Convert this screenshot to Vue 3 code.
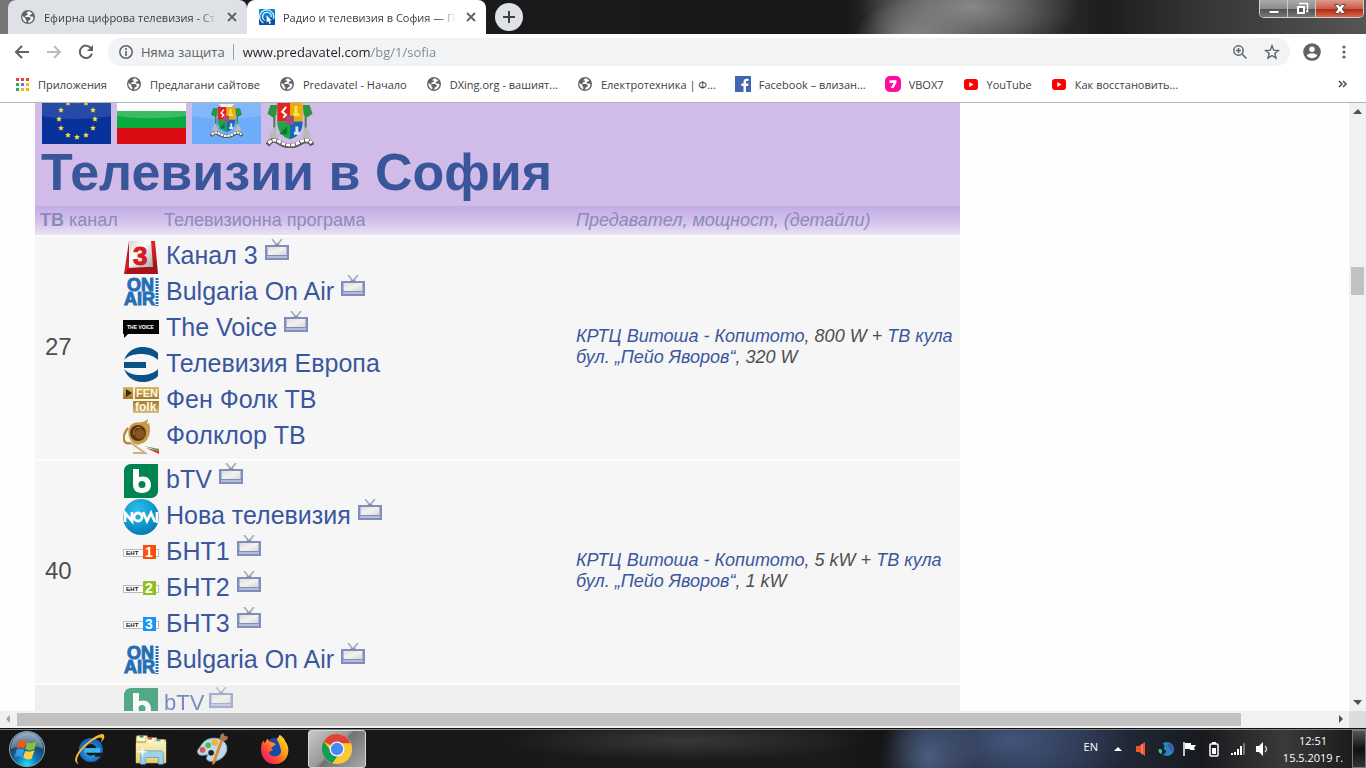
<template>
  <div class="browser">
    <!-- Shared icon shapes -->
    <svg class="sprite" aria-hidden="true">
      <defs>
        <linearGradient id="screen" x1="0" y1="0" x2="1" y2="1">
          <stop offset="0" stop-color="#ddd" />
          <stop offset=".5" stop-color="#f4f2ee" />
          <stop offset="1" stop-color="#d8d8d8" />
        </linearGradient>
        <linearGradient id="red" x1="0" y1="0" x2="1" y2="1">
          <stop offset="0" stop-color="#9c1014" />
          <stop offset=".5" stop-color="#d8262a" />
          <stop offset="1" stop-color="#8c0c10" />
        </linearGradient>
        <linearGradient id="silver" x1="0" y1="0" x2="1" y2="1">
          <stop offset="0" stop-color="#d8d0d0" />
          <stop offset=".4" stop-color="#fff" />
          <stop offset="1" stop-color="#a8a4a4" />
        </linearGradient>
        <linearGradient id="gold" x1="0" y1="0" x2="0" y2="1">
          <stop offset="0" stop-color="#d8b86a" />
          <stop offset=".5" stop-color="#9c7424" />
          <stop offset="1" stop-color="#d8be80" />
        </linearGradient>
        <radialGradient id="nova" cx=".4" cy=".3" r=".8">
          <stop offset="0" stop-color="#2fc0ea" />
          <stop offset=".6" stop-color="#0d95cc" />
          <stop offset="1" stop-color="#0a6fa8" />
        </radialGradient>
        <radialGradient id="orb" cx=".5" cy=".95" r=".9">
          <stop offset="0" stop-color="#1fe0fb" />
          <stop offset=".35" stop-color="#0f78b4" />
          <stop offset=".7" stop-color="#1b4368" />
          <stop offset="1" stop-color="#6c8ca4" />
        </radialGradient>
        <radialGradient id="ie" cx=".5" cy=".6" r=".6">
          <stop offset="0" stop-color="#38c0f8" />
          <stop offset="1" stop-color="#1566bc" />
        </radialGradient>
        <linearGradient id="folder" x1="0" y1="0" x2="0" y2="1">
          <stop offset="0" stop-color="#fbf2bb" />
          <stop offset="1" stop-color="#e6cd73" />
        </linearGradient>
        <linearGradient id="fire" x1="1" y1="0" x2="0" y2="1">
          <stop offset="0" stop-color="#ffe930" />
          <stop offset=".4" stop-color="#ff9a14" />
          <stop offset=".7" stop-color="#ff3d3e" />
          <stop offset="1" stop-color="#d8107c" />
        </linearGradient>
      </defs>

      <symbol id="globe" viewBox="0 0 16 16">
        <circle cx="8" cy="8" r="7" fill="#5f6368" />
        <path d="M8.200 2.300 6 4.300l2.100.4-.4 1.200-2 .5-.6 1.500h4.200l1.500 1.700-.4 1.200-1.600.7-1 2.300c3.400-.1 5.700-2.800 5.700-5.500l-1.300-.8-1.700.2-1.100-1.300 1.700-1.200 1.200-.1C11.600 3.500 10 2.500 8.200 2.300zM2.300 7.100C2 9.500 3.500 12.300 6.100 13.400l.4-1.800-1.200-1.300.2-1.300z" fill="#fff" />
      </symbol>
      <symbol id="radio" viewBox="0 0 16 16">
        <rect width="16" height="16" rx="1" fill="#0a83cf" />
        <path d="M0 9h16v6a1 1 0 0 1-1 1H1a1 1 0 0 1-1-1z" fill="#0752a8" />
        <g fill="none" stroke="#d4efff" stroke-width="1.300">
          <path d="M4.500 14A7 7 0 1 1 14.300 10" />
          <path d="M6 11.500A4.300 4.300 0 1 1 12.200 8" />
        </g>
        <path d="M7.500 6.500v7l1.700-1.500 1.300 3 1.500-.7-1.400-2.800h2.300z" fill="#fff" />
      </symbol>
      <symbol id="facebook" viewBox="0 0 16 16">
        <rect width="16" height="16" fill="#4267b2" />
        <path d="M11 16v-6h2.200l.3-2.400H11V6.200c0-.7.300-1.200 1.200-1.200h1.300V2.800C13 2.700 12.400 2.700 11.700 2.700 9.700 2.700 8.500 3.900 8.500 6v1.600H6.400V10h2.100v6z" fill="#fff" />
      </symbol>
      <symbol id="vbox" viewBox="0 0 16 16">
        <rect width="16" height="16" rx="5" fill="#ff0c9c" />
        <path d="M4.500 4.300h7v2.300L8.600 12H5.700l2.900-5H4.500z" fill="#fff" />
      </symbol>
      <symbol id="youtube" viewBox="0 0 16 16">
        <rect x="1" y="3" width="14" height="11" rx="3" fill="#f00" />
        <path d="m6.300 6 4.200 2.500-4.200 2.500z" fill="#fff" />
      </symbol>

      <symbol id="tv" viewBox="0 0 24 21">
        <path d="m7 0 5 6 5-6" fill="none" stroke="#a3a6b0" stroke-width="1.500" />
        <path d="M10 5h4l1 2H9z" fill="#8c90a0" />
        <path d="M1 7h22v13H1z" fill="#b4bcd6" stroke="#7f8fbd" stroke-width="2" />
        <path d="M3 8h18v8H3z" fill="url(#screen)" />
        <path d="M2 16.500h20" stroke="#7f8fbd" />
      </symbol>

      <symbol id="kanal3" viewBox="0 0 36 36">
        <path d="M6 2h26l3 33H1z" fill="url(#red)" />
        <path d="m6 2 22-1 2 27-24 1z" fill="url(#silver)" />
        <path d="m1 35 4-6 25-1 5 7z" fill="#a81218" />
      </symbol>
      <symbol id="onair" viewBox="0 0 36 36">
        <path d="M34 3v28" stroke="#256eb4" stroke-width="3" stroke-dasharray="2 1" />
      </symbol>
      <symbol id="voice" viewBox="0 0 36 36">
        <path d="M0 9h36v14H5l-4 4v-4H0z" fill="#050505" />
      </symbol>
      <symbol id="europa" viewBox="0 0 36 36">
        <path d="M1 13C4 5 11 0 19 0c7 0 12 2 16 6v7c-4-4-10-6-17-6-8 0-13 2-17 6zM1 22C4 30 11 35 19 35c7 0 12-2 16-6v-7c-4 4-10 6-17 6-8 0-13-2-17-6zM1 15h22v6H1z" fill="#0a5288" />
      </symbol>
      <symbol id="fenfolk" viewBox="0 0 36 36">
        <path d="M0 4h36v12H0zM10 18h26v12H10z" fill="url(#gold)" />
        <path d="M11 4v12" stroke="#f8ecc4" stroke-width="2" />
        <path d="m3 6 6 4-6 4z" fill="#3c2808" />
      </symbol>
      <symbol id="folklor" viewBox="0 0 36 36">
        <path d="M8 6c5-5 10 0 17-6l-1 5 2-1c2 7 1 12-2 17-5 6-13 6-16 1S4 11 8 6z" fill="#c89a4a" />
        <circle cx="15" cy="14" r="8" fill="#5a3510" />
        <circle cx="17" cy="15" r="5" fill="#89551e" />
        <path d="M11 16c-1-6 3-9 7-7" fill="none" stroke="#bd8d4a" />
        <path d="M5 9c-7 9-5 17 3 15" fill="none" stroke="#b58b3c" stroke-width="2.500" />
        <path d="m8 24 14 10H10" fill="none" stroke="#c9b184" stroke-width="2" />
        <path d="m18 24 18 5v2l-18-5z" fill="#f7f7f7" />
        <path d="m21 27 15 3v2z" fill="#36a05a" />
        <path d="m23 29 13 3v3z" fill="#e42d2d" />
      </symbol>
      <symbol id="btv" viewBox="0 0 36 36">
        <path d="M8 1h27v27c0 4-3 7-7 7H1V8c0-4 3-7 7-7z" fill="#008450" />
        <path d="M10 6h6v8c7-2 12 1 12 8 0 5-4 8-9 8-7 0-9-4-9-9zm9 12a3.500 3.500 0 1 0 0 7 3.500 3.500 0 0 0 0-7z" fill="#fff" />
      </symbol>
      <symbol id="novatv" viewBox="0 0 36 36">
        <circle cx="18" cy="18" r="18" fill="url(#nova)" />
        <g fill="none" stroke="#fff" stroke-width="2.800">
          <path d="M2 23v-9l7 8v-9M20 13l4 9 4-8 4 9" />
          <circle cx="15" cy="18" r="4" />
          <path d="M34 13v11" />
        </g>
      </symbol>
      <symbol id="bnt" viewBox="0 0 36 36">
        <path d="M.5 14.500h35v7H.5z" fill="#fff" stroke="#bbb" />
        <path d="M20 10h13v14H20z" fill="currentColor" />
      </symbol>

      <symbol id="arms" viewBox="0 0 48 46">
        <path d="M8 10v25M40 10v25" stroke="#4c7a4e" stroke-width="2" />
        <path d="M4 2h7l-1 10-3 3-6-4zM44 2h-7l1 10 3 3 6-4z" fill="#28963c" />
        <path d="m3 31 5-7 4 11-9 5zM45 31l-5-7-4 11 9 5z" fill="#b8bcb8" />
        <path d="M11 0h13v19H11z" fill="#e32222" />
        <path d="M24 0h13v19H24z" fill="#f0a90c" />
        <path d="M11 19h13v18c-8-2-13-8-13-18z" fill="#21a347" />
        <path d="M24 19h13c0 10-5 16-13 18z" fill="#1768b0" />
        <path d="m20 4-4 5 4 3-3 3" stroke="#fff" stroke-width="2" fill="none" />
        <path d="M27 12h7M30 3v10" stroke="#fbe34a" stroke-width="3" />
        <path d="M28 31h6M31 24v7" stroke="#d8e5f2" stroke-width="3" />
        <path d="m13 32 8-8v8z" fill="#0c7b2c" />
        <path d="M20 13h8v9h-8z" fill="#a14f7a" />
        <path d="M1 43c4-6 7-6 13-2 7 4 13 4 20 0 6-4 10-3 13 2" fill="none" stroke="#5a5a5a" stroke-width="5" />
        <path d="M2 41c4-4 7-4 12-1 7 4 13 4 20 0 5-3 9-3 12 1" fill="none" stroke="#fff" stroke-width="3" stroke-dasharray="4 1" />
      </symbol>

      <symbol id="start" viewBox="0 0 40 40">
        <circle cx="20" cy="20" r="18.500" fill="url(#orb)" stroke="#8ea4b4" />
        <path d="M3 20C4 10 11 3 20 3s16 7 17 17c-8-5-25-5-34 0z" fill="#fff" opacity=".3" />
        <path d="M11 12c3-2 6-2 8 0l-2 8c-3-2-5-2-8 0z" fill="#ec5a24" />
        <path d="M20 13c3 1 6 1 10-1l-2 8c-4 2-7 2-10 0z" fill="#86c03c" />
        <path d="M9 21c3-2 5-2 8 0l-2 8c-3-2-6-2-8 0z" fill="#3c9ae4" />
        <path d="M18 22c3 1 6 1 10-1l-3 9c-3 2-6 1-9-1z" fill="#fcd040" />
      </symbol>
      <symbol id="explorer" viewBox="0 0 36 36">
        <circle cx="20" cy="19" r="9.500" fill="none" stroke="url(#ie)" stroke-width="6.500" />
        <path d="M13 17h17v5H13z" fill="#3eb4f4" />
        <path d="M24 22h10v4H24z" fill="#191919" />
        <path d="M7 34C-1 32 5 20 16 11S34 0 34 4c1 2-1 5-4 8 5-9-2-7-11-1C9 19 2 29 7 34z" fill="#f6bd28" />
      </symbol>
      <symbol id="files" viewBox="0 0 36 36">
        <path d="M2 5h12l2 3h18v25H2z" fill="#d8c06b" />
        <path d="M3 4h11v6H3zM12 6h12v6H12zM22 8h10v6H22z" fill="#fffbe4" stroke="#c5a94b" stroke-width=".6" />
        <path d="M6 4h4v2H6z" fill="#17a545" />
        <path d="M15 6h4v2h-4z" fill="#de4b2e" />
        <path d="M24 8h4v2h-4z" fill="#2b94de" />
        <path d="M2 12h14l2-2h16v22H2z" fill="url(#folder)" />
        <path d="M7 34V24c0-4 2-4 4-4h16c3 0 4 1 4 4v10h-5v-7H12v7z" fill="#9ed2e6" stroke="#68aacb" />
        <path d="m9 15 1 5 5 1-5 1-1 5-1-5-5-1 5-1z" fill="#fff" />
      </symbol>
      <symbol id="paint" viewBox="0 0 36 36">
        <path d="M5 15C10 4 28 4 32 14c3 8-5 17-15 17-6 0-7-3-4-7-4 0-10 2-11-2-1-3 1-4 3-7z" fill="#b9dcef" stroke="#8ab4cc" />
        <circle cx="7" cy="19" r="3" fill="#e35648" />
        <circle cx="13" cy="14" r="3" fill="#58b850" />
        <circle cx="20" cy="11" r="3.500" fill="#f3b33c" />
        <circle cx="16" cy="22" r="3" fill="#202020" />
        <path d="m29 9-9 24-3 2 1-5 8-22z" fill="#e9882c" />
        <path d="m25 8 1-5 3-2 1 3 4 1-1 3-4 2z" fill="#a87751" />
      </symbol>
      <symbol id="firefox" viewBox="0 0 36 36">
        <circle cx="19" cy="18" r="12" fill="#154bab" />
        <path d="M23 3c3 2 5 4 6 7 7 9 2 24-11 24C7 34 1 25 4 12l2-3 1 3 3-5c1 3 3 4 6 4l3 2-5 4 2 3c-4-1-6 3-2 5 7 3 12-2 10-7-1-4-2-7-4-10z" fill="url(#fire)" />
      </symbol>
      <symbol id="chrome" viewBox="0 0 36 36">
        <circle cx="18" cy="18" r="16" fill="#fcc934" />
        <path d="M18 18 4 10a16 16 0 0 1 28 1v1H18z" fill="#db4437" />
        <path d="m4 10 9 12 6 3-6 8A16 16 0 0 1 4 10z" fill="#149b58" />
        <circle cx="18" cy="18" r="8" fill="#f4f4f4" />
        <circle cx="18" cy="18" r="6.500" fill="#4689f4" />
      </symbol>
    </svg>

    <header class="titlebar">
      <div v-for="tab in tabs" :key="tab.title" class="tab" :class="{ active: tab.active }">
        <svg class="icon16"><use :href="'#' + tab.icon" /></svg>
        <span class="tab-title">{{ tab.title }}</span>
        <button class="tab-close" aria-label="Close tab">
          <svg width="10" height="10" viewBox="0 0 10 10"><path d="m1 1 8 8M9 1 1 9" stroke="#5f6368" stroke-width="1.800" /></svg>
        </button>
      </div>
      <button class="new-tab" aria-label="New tab">
        <svg width="14" height="14" viewBox="0 0 14 14"><path d="M7 1v12M1 7h12" stroke="#3c4043" stroke-width="2" /></svg>
      </button>
      <div class="window-buttons">
        <button class="minimize" aria-label="Minimize">
          <svg width="14" height="14" viewBox="0 0 14 14"><path d="M2 8.500h10v3H2z" fill="#fff" stroke="#555a6c" /></svg>
        </button>
        <button class="restore" aria-label="Restore">
          <svg width="14" height="14" viewBox="0 0 14 14"><path d="M4 1.500h8.500v8H11" fill="none" stroke="#fff" stroke-width="1.500" /><path d="M3 5h6v6H3z" fill="#555a6c" stroke="#fff" stroke-width="2" /></svg>
        </button>
        <button class="close" aria-label="Close">
          <svg width="14" height="14" viewBox="0 0 14 14"><path d="M1.500 2.500h4L7 4.500l1.500-2h4L9.200 7l3.300 4.500h-4L7 9.500l-1.500 2h-4L4.800 7z" fill="#fff" stroke="#64484c" /></svg>
        </button>
      </div>
    </header>

    <nav class="toolbar">
      <button class="tool" aria-label="Back">
        <svg width="16" height="16" viewBox="0 0 16 16"><path d="M15 8H2M8 2 2 8l6 6" fill="none" stroke="#5f6368" stroke-width="2" /></svg>
      </button>
      <button class="tool" aria-label="Forward">
        <svg width="16" height="16" viewBox="0 0 16 16"><path d="M1 8h13M8 2l6 6-6 6" fill="none" stroke="#babcbe" stroke-width="2" /></svg>
      </button>
      <button class="tool" aria-label="Reload">
        <svg width="16" height="16" viewBox="0 0 16 16"><path d="M13.200 4.400A6.200 6.200 0 1 0 14 9.500" fill="none" stroke="#5f6368" stroke-width="2" /><path d="M15 1v6H9z" fill="#5f6368" /></svg>
      </button>
      <div class="omnibox">
        <svg width="14" height="14" viewBox="0 0 14 14"><circle cx="7" cy="7" r="6.200" fill="none" stroke="#5f6368" stroke-width="1.500" /><path d="M7 6v5M7 3v2" stroke="#5f6368" stroke-width="1.600" /></svg>
        <span class="security">Няма защита</span>
        <input v-model="url" class="url" type="text" aria-label="Address" />
        <button class="omni-button" aria-label="Zoom">
          <svg width="16" height="16" viewBox="0 0 16 16"><circle cx="6.500" cy="6.500" r="4.700" fill="none" stroke="#5f6368" stroke-width="1.500" /><path d="m10 10 4.500 4.500M4 6.500h5M6.500 4v5" stroke="#5f6368" stroke-width="1.500" /></svg>
        </button>
        <button class="omni-button" aria-label="Bookmark">
          <svg width="16" height="16" viewBox="0 0 16 16"><path d="m8 1.800 1.700 4.400 4.700.3-3.600 3 1.200 4.600L8 11.500l-4 2.600 1.200-4.600-3.600-3 4.700-.3z" fill="none" stroke="#5f6368" stroke-width="1.400" /></svg>
        </button>
      </div>
      <button class="tool" aria-label="Profile">
        <svg width="18" height="18" viewBox="0 0 18 18"><circle cx="9" cy="9" r="8.800" fill="#5f6368" /><circle cx="9" cy="6.300" r="2.700" fill="#fff" /><path d="M3.700 12.500c2-3 8.600-3 10.600 0-2.600 3.600-8 3.600-10.600 0z" fill="#fff" /></svg>
      </button>
      <button class="tool" aria-label="Menu">
        <svg width="16" height="16" viewBox="0 0 16 16" fill="#5f6368"><circle cx="8" cy="3" r="1.600" /><circle cx="8" cy="8" r="1.600" /><circle cx="8" cy="13" r="1.600" /></svg>
      </button>
    </nav>

    <nav class="bookmarks">
      <a href="#" class="bookmark">
        <svg class="icon16" viewBox="0 0 16 16">
          <path d="M2 2h3v3H2zM7 2h3v3H7zM12 2h3v3h-3z" fill="#ea4335" />
          <path d="M2 7h3v3H2zM2 12h3v3H2z" fill="#34a853" />
          <path d="M7 7h3v3H7z" fill="#4285f4" />
          <path d="M12 7h3v3h-3zM7 12h3v3H7zM12 12h3v3h-3z" fill="#fbb605" />
        </svg>
        <span>Приложения</span>
      </a>
      <a v-for="item in bookmarks" :key="item.label" href="#" class="bookmark">
        <svg class="icon16"><use :href="'#' + item.icon" /></svg>
        <span>{{ item.label }}</span>
      </a>
      <button class="more" aria-label="More bookmarks">
        <svg width="10" height="8" viewBox="0 0 10 8"><path d="m1 1 3 3-3 3M5 1l3 3-3 3" fill="none" stroke="#4a4e53" stroke-width="1.500" /></svg>
      </button>
    </nav>

    <div class="viewport">
      <main class="page">
        <section class="panel">
          <div class="heading">
            <div class="flags">
              <svg width="69" height="41" viewBox="0 0 69 41">
                <path d="M0 0h69v41H0z" fill="#08319b" />
                <path d="M0 0h69v13C45 17 20 17 0 13z" fill="#fff" opacity=".12" />
                <g fill="#f8d83c">
                  <path v-for="(star, i) in stars" :key="i" :transform="`translate(${star.x} ${star.y})`" d="m0-2.800.9 1.800 2 .2-1.500 1.400.4 2L0 1.800l-1.800.8.4-2L-2.900-.8l2-.2z" />
                </g>
              </svg>
              <svg width="69" height="41" viewBox="0 0 69 41">
                <path d="M0 0h69v8H0z" fill="#fff" />
                <path d="M0 8h69v17H0z" fill="#0aab3c" />
                <path d="M0 25h69v16H0z" fill="#dc0c14" />
                <path d="M0 8h69v5c-25 3-49 3-69 0z" fill="#fff" opacity=".2" />
              </svg>
              <svg width="69" height="41" viewBox="0 0 69 41">
                <path d="M0 0h69v41H0z" fill="#6dabfb" />
                <path d="M0 0h69v13C45 17 20 17 0 13z" fill="#fff" opacity=".15" />
                <path d="m27 1 3 4h9l3-4z" fill="#eef2f6" />
                <use href="#arms" x="18" y="4" width="33" height="31" />
              </svg>
              <svg width="48" height="45"><use href="#arms" width="48" height="45" /></svg>
            </div>
            <h1>Телевизии в София</h1>
          </div>
          <table>
            <thead>
              <tr>
                <th class="channel"><b>ТВ</b> канал</th>
                <th class="programs">Телевизионна програма</th>
                <th class="details">Предавател, мощност, (детайли)</th>
              </tr>
            </thead>
            <tbody>
              <tr v-for="(row, index) in rows" :key="index" :class="{ faded: row.faded }">
                <td class="channel">{{ row.channel }}</td>
                <td class="programs">
                  <div v-for="program in row.programs" :key="program.name" class="program">
                    <svg class="logo" viewBox="0 0 36 36" :class="program.logo">
                      <use :href="'#' + (program.symbol || program.logo)" />
                      <text
                        v-for="mark in logoTexts[program.logo]"
                        :key="mark.text"
                        :x="mark.x"
                        :y="mark.y"
                        :font-size="mark.size"
                        :fill="mark.fill"
                        :stroke="mark.stroke">{{ mark.text }}</text>
                    </svg>
                    <a href="#">{{ program.name }}</a>
                    <svg v-if="program.online" class="tv"><use href="#tv" /></svg>
                  </div>
                </td>
                <td class="details">
                  <template v-if="row.power">
                    <a href="#">КРТЦ Витоша - Копитото</a>, {{ row.power[0] }} +
                    <a href="#">ТВ кула бул. „Пейо Яворов“</a>, {{ row.power[1] }}
                  </template>
                </td>
              </tr>
            </tbody>
          </table>
        </section>
      </main>
      <div class="scrollbar vertical">
        <svg class="arrow" viewBox="0 0 17 17"><path d="m4 11 5-5 4 5z" fill="#505050" /></svg>
        <div class="before"></div>
        <div class="thumb"></div>
        <div class="after"></div>
        <svg class="arrow" viewBox="0 0 17 17"><path d="m4 6 5 5 4-5z" fill="#505050" /></svg>
      </div>
    </div>
    <div class="scrollbar horizontal">
      <svg class="arrow" viewBox="0 0 17 17"><path d="M10 4 6 8l4 4z" fill="#a3a3a3" /></svg>
      <div class="thumb"></div>
      <div class="after"></div>
      <svg class="arrow" viewBox="0 0 17 17"><path d="m7 4 4 4-4 4z" fill="#505050" /></svg>
      <div class="corner"></div>
    </div>

    <footer class="taskbar">
      <button class="start" aria-label="Start"><svg width="40" height="38"><use href="#start" /></svg></button>
      <button v-for="app in apps" :key="app" class="app" :class="{ running: app === 'chrome' }" :aria-label="app">
        <svg width="34" height="34"><use :href="'#' + app" /></svg>
      </button>
      <div class="tray">
        <span class="language">EN</span>
        <svg viewBox="0 0 16 16"><path d="m4 10 4-4 4 4z" fill="#fff" /></svg>
        <svg viewBox="0 0 16 16"><path d="M2 5h3l6-4v14l-6-4H2z" fill="#ea5530" /><path d="M8 3v10" stroke="#ff9d7c" /><path d="M13 4c2 3 2 5 0 8" fill="none" stroke="#5a1c14" /></svg>
        <svg viewBox="0 0 16 16"><circle cx="9" cy="8" r="7" fill="#2a86b4" /><path d="M2 3c4-1 5 2 4 4s3 2 2 4-3 3-6 3c-2-4-2-8 0-11z" fill="#142438" /><path d="M1 8c3 0 4 2 2 5-2-1-3-3-2-5z" fill="#48c890" /><path d="M10 2c4 1 6 5 4 9-1-3-4-3-4-9z" fill="#3b59b4" /></svg>
        <svg viewBox="0 0 16 16"><path d="M2 1v14" stroke="#fff" stroke-width="1.500" /><path d="M3 2h6v2h5l-2 3 1 2H8V8H3z" fill="#fff" /></svg>
        <svg viewBox="0 0 16 16"><path d="M6 1h4v2H6z" fill="#fff" /><rect x="4" y="3" width="8" height="12" rx="1" fill="none" stroke="#fff" stroke-width="1.500" /><path d="M6 7h4v6H6z" fill="#fff" /></svg>
        <svg viewBox="0 0 16 16"><path d="M1 12h2v2H1zM4 11h2v3H4zM7 8h2v6H7zM10 5h2v9h-2z" fill="#fff" /><path d="M13.500 2.500h1v11h-1z" fill="none" stroke="#777" /></svg>
        <svg viewBox="0 0 16 16"><path d="M2 5h3l4-4v14l-4-4H2z" fill="#fff" /><path d="M11 5c2 2 2 4 0 6" fill="none" stroke="#ccc" stroke-width="1.500" /></svg>
        <div class="clock">
          <span>12:51</span>
          <span>15.5.2019 г.</span>
        </div>
      </div>
      <button class="show-desktop" aria-label="Show desktop"></button>
    </footer>
  </div>
</template>

<script setup>
import { ref } from 'vue';

const url = ref('www.predavatel.com/bg/1/sofia');

const tabs = [
  { title: 'Ефирна цифрова телевизия - Ст', icon: 'globe', active: false },
  { title: 'Радио и телевизия в София — П', icon: 'radio', active: true },
];

const bookmarks = [
  { label: 'Предлагани сайтове', icon: 'globe' },
  { label: 'Predavatel - Начало', icon: 'globe' },
  { label: 'DXing.org - вашият...', icon: 'globe' },
  { label: 'Електротехника | Ф...', icon: 'globe' },
  { label: 'Facebook – влизан...', icon: 'facebook' },
  { label: 'VBOX7', icon: 'vbox' },
  { label: 'YouTube', icon: 'youtube' },
  { label: 'Как восстановить...', icon: 'youtube' },
];

const apps = ['explorer', 'files', 'paint', 'firefox', 'chrome'];

// Twelve stars in a circle, the top ones are scrolled out of view
const stars = Array.from({ length: 12 }, (_, i) => {
  const angle = (i * Math.PI) / 6;
  return {
    x: Math.round(35 + 18 * Math.cos(angle)),
    y: Math.round(16 + 18 * Math.sin(angle)),
  };
});

// Lettering inside the channel logos
const bntText = { text: 'БНТ', x: 3, y: 20, size: 6, fill: '#111' };
const logoTexts = {
  kanal3: [{ text: '3', x: 10, y: 26, size: 26, fill: '#d21d23', stroke: '#d21d23' }],
  onair: [
    { text: 'ON', x: 4, y: 16, size: 18, fill: '#256eb4', stroke: '#256eb4' },
    { text: 'AIR', x: 1, y: 30, size: 18, fill: '#256eb4', stroke: '#256eb4' },
  ],
  voice: [{ text: 'THE VOICE', x: 4, y: 18, size: 5, fill: '#fff' }],
  fenfolk: [
    { text: 'FEN', x: 13, y: 14, size: 11, fill: '#fff7da' },
    { text: 'folk', x: 12, y: 28, size: 12, fill: '#fff7da' },
  ],
  bnt1: [bntText, { text: '1', x: 22, y: 22, size: 14, fill: '#fff' }],
  bnt2: [bntText, { text: '2', x: 22, y: 22, size: 14, fill: '#fff' }],
  bnt3: [bntText, { text: '3', x: 22, y: 22, size: 14, fill: '#fff' }],
};

const rows = [
  {
    channel: '27',
    power: ['800 W', '320 W'],
    programs: [
      { name: 'Канал 3', logo: 'kanal3', online: true },
      { name: 'Bulgaria On Air', logo: 'onair', online: true },
      { name: 'The Voice', logo: 'voice', online: true },
      { name: 'Телевизия Европа', logo: 'europa' },
      { name: 'Фен Фолк ТВ', logo: 'fenfolk' },
      { name: 'Фолклор ТВ', logo: 'folklor' },
    ],
  },
  {
    channel: '40',
    power: ['5 kW', '1 kW'],
    programs: [
      { name: 'bTV', logo: 'btv', online: true },
      { name: 'Нова телевизия', logo: 'novatv', online: true },
      { name: 'БНТ1', logo: 'bnt1', symbol: 'bnt', online: true },
      { name: 'БНТ2', logo: 'bnt2', symbol: 'bnt', online: true },
      { name: 'БНТ3', logo: 'bnt3', symbol: 'bnt', online: true },
      { name: 'Bulgaria On Air', logo: 'onair', online: true },
    ],
  },
  {
    channel: '',
    faded: true,
    programs: [{ name: 'bTV', logo: 'btv', online: true }],
  },
];
</script>

<style>
body {
  margin: 0;
}
</style>

<style scoped>
.browser {
  display: flex;
  flex-direction: column;
  height: 100vh;
  overflow: hidden;
  background: #fff;
  font-family: "Open Sans", "Noto Sans", sans-serif;
  font-size: 11px;
  color: #3c4043;
}

button {
  display: flex;
  align-items: center;
  justify-content: center;
  padding: 0;
  border: 0;
  background: none;
  font-family: inherit;
}

a {
  color: inherit;
  text-decoration: none;
}

.sprite {
  position: absolute;
  width: 0;
  height: 0;
}

.icon16 {
  flex: none;
  width: 16px;
  height: 16px;
}

/* Tabs */
.titlebar {
  display: flex;
  flex: none;
  align-items: center;
  height: 34px;
  padding-left: 8px;
  background:
    radial-gradient(ellipse 60px 40px at 67% 110%, #858585, transparent),
    radial-gradient(ellipse 110px 50px at 71% 20%, #888, transparent),
    linear-gradient(90deg, #777 0, #777 8px, #1c1c1c 30px, #181818 62%, #505050 68%, #333 75%, #1d1d1d 81%, #333 87%, #555 100%);
}

.tab {
  display: flex;
  align-items: center;
  box-sizing: border-box;
  width: 239px;
  height: 34px;
  padding: 0 8px 0 12px;
  border-radius: 8px 8px 0 0;
  background: #dee1e6;
}

.tab.active {
  background: #fff;
}

.tab-title {
  flex: 1;
  margin: 0 8px;
  overflow: hidden;
  white-space: nowrap;
  mask-image: linear-gradient(90deg, #000 90%, transparent);
}

.tab-close {
  width: 14px;
  height: 14px;
}

.new-tab {
  width: 28px;
  height: 28px;
  margin-left: 9px;
  border-radius: 50%;
  background: #dee1e6;
}

.window-buttons {
  display: flex;
  align-self: flex-start;
  margin-left: auto;
  margin-right: 2px;
  border: 1px solid #d0d0d0;
  border-top: 0;
  border-radius: 0 0 5px 5px;
  overflow: hidden;
}

.window-buttons button {
  width: 28px;
  height: 17px;
  border-right: 1px solid #c8c8c8;
  background: linear-gradient(#aaa 0, #8c8c8c 50%, #4e4e4e 51%, #777);
}

.window-buttons .close {
  width: 47px;
  border-right: 0;
  background: linear-gradient(#dc9a8c 0, #cc5d48 50%, #b02410 51%, #d8684a);
}

/* Address bar */
.toolbar {
  display: flex;
  flex: none;
  align-items: center;
  height: 36px;
  padding: 0 6px;
  background: #fff;
}

.tool {
  width: 32px;
  height: 28px;
}

.omnibox {
  display: flex;
  flex: 1;
  align-items: center;
  height: 28px;
  margin: 0 6px;
  padding: 0 2px 0 11px;
  border-radius: 14px;
  background: #f1f3f4;
  font-size: 13px;
}

.security {
  margin: 0 8px;
  color: #5f6368;
}

/* Host is dark, the path after it is grey */
.url {
  flex: 1;
  height: 16px;
  padding: 0 0 0 9px;
  border: 0;
  border-left: 1px solid #9aa0a6;
  outline: 0;
  font: inherit;
  color: transparent;
  background: linear-gradient(90deg, #202124 137px, #80868b 137px);
  background-clip: text;
}

.omni-button {
  width: 32px;
  height: 28px;
}

/* Bookmarks */
.bookmarks {
  display: flex;
  flex: none;
  align-items: center;
  gap: 19px;
  height: 28px;
  padding: 0 18px 4px 14px;
  border-bottom: 1px solid #b4b4b4;
  background: #fff;
}

.bookmark {
  display: flex;
  align-items: center;
  gap: 8px;
  height: 28px;
  white-space: nowrap;
}

.more {
  margin-left: auto;
}

/* Page */
.viewport {
  display: flex;
  flex: 1;
  min-height: 0;
}

.page {
  flex: 1;
  overflow: hidden;
  padding-left: 35px;
  background: #fefefe;
  font-family: "Liberation Sans", sans-serif;
}

.panel {
  max-width: 925px;
  color: #4f4f4f;
}

.heading {
  height: 103px;
  background: #d1bbe9;
}

.flags {
  display: flex;
  gap: 6px;
  height: 41px;
  padding-left: 7px;
}

.flags svg:last-child {
  flex: none;
  margin-left: -1px;
}

h1 {
  margin: 0;
  padding-left: 6px;
  font-size: 52px;
  line-height: 57px;
  color: #3a569b;
}

table {
  width: 100%;
  border-collapse: collapse;
  table-layout: fixed;
}

th {
  height: 29px;
  padding: 0;
  text-align: left;
  font-size: 18px;
  font-weight: normal;
  color: #8a8bbb;
}

thead {
  background: linear-gradient(#c3ace7, #d3c1ea 50%, #ebe4f4);
}

th.channel {
  width: 80px;
  padding-left: 5px;
}

th.programs {
  width: 412px;
  padding-left: 44px;
}

td {
  padding: 2px 0 4px;
  border-top: 2px solid #fcfcfc;
  background: #f6f6f6;
}

td.channel {
  padding-left: 10px;
  font-size: 24px;
}

td.programs {
  padding-left: 3px;
}

.details {
  font-style: italic;
}

td.details {
  font-size: 18px;
  line-height: 21px;
}

td a {
  color: #3a569f;
}

.program {
  display: flex;
  align-items: flex-start;
  height: 36px;
  font-size: 25px;
  line-height: 32px;
  white-space: nowrap;
}

.logo {
  flex: none;
  width: 36px;
  height: 36px;
  margin-right: 7px;
  font-family: "Liberation Sans", sans-serif;
  font-weight: bold;
}

.bnt1 {
  color: #ff4e0c;
}

.bnt2 {
  color: #92c11e;
}

.bnt3 {
  color: #1494f8;
}

.tv {
  width: 24px;
  height: 21px;
  margin-left: 7px;
}

.faded td {
  background: #f0f0f0;
}

.faded .program {
  font-size: 22px;
  opacity: 0.65;
}

.faded .logo {
  margin-right: 5px;
}

.faded .tv {
  margin-left: 5px;
}

/* Scrollbars */
.scrollbar {
  display: flex;
  flex: none;
  background: #f1f1f1;
}

.scrollbar .thumb {
  background: #c1c1c1;
}

.arrow {
  flex: none;
  width: 17px;
  height: 17px;
}

.vertical {
  flex-direction: column;
  width: 17px;
}

.vertical .before {
  flex: 147;
}

.vertical .thumb {
  height: 28px;
  margin: 0 2px;
}

.vertical .after {
  flex: 400;
}

.horizontal {
  height: 17px;
}

.horizontal .thumb {
  flex: 1224;
  margin: 2px 0;
}

.horizontal .after {
  flex: 91;
}

.corner {
  width: 17px;
  background: #dcdcdc;
}

/* Taskbar */
.taskbar {
  display: flex;
  flex: none;
  align-items: center;
  box-sizing: border-box;
  height: 40px;
  border-top: 1px solid #101010;
  box-shadow: inset 0 1px #808080;
  background:
    radial-gradient(ellipse 50px 60px at 68% 70%, #4a5c80, transparent),
    radial-gradient(ellipse 120px 60px at 74% 30%, #42547a, transparent),
    radial-gradient(ellipse 180px 20px at 50% 30%, #383838, transparent),
    linear-gradient(90deg, #151515 0, #1b1b1b 60%, #141414 65%, #263146 76%, #202838 82%, #181a1e 88%, #3a3a3a 94%, #151515);
}

.start {
  width: 54px;
}

.app {
  box-sizing: border-box;
  width: 58px;
  height: 38px;
  margin-left: 4px;
}

.running {
  border: 1px solid #d8d8d8;
  border-radius: 3px;
  background: linear-gradient(135deg, #c8c8c8 0, #999 45%, #737373 50%, #a8a8a8 100%);
}

.start + .app {
  margin-left: 6px;
}

.tray {
  display: flex;
  align-items: center;
  gap: 8px;
  margin-left: auto;
  color: #fff;
}

.tray svg {
  flex: none;
  width: 16px;
  height: 16px;
}

.language {
  margin-right: 4px;
  padding-bottom: 4px;
}

.clock {
  display: flex;
  flex-direction: column;
  align-items: center;
  width: 70px;
  line-height: 17px;
  white-space: nowrap;
}

.show-desktop {
  box-sizing: border-box;
  width: 14px;
  height: 38px;
  margin-left: 4px;
  border: 1px solid #777;
  background: linear-gradient(#555, #111 50%, #333);
}
</style>
